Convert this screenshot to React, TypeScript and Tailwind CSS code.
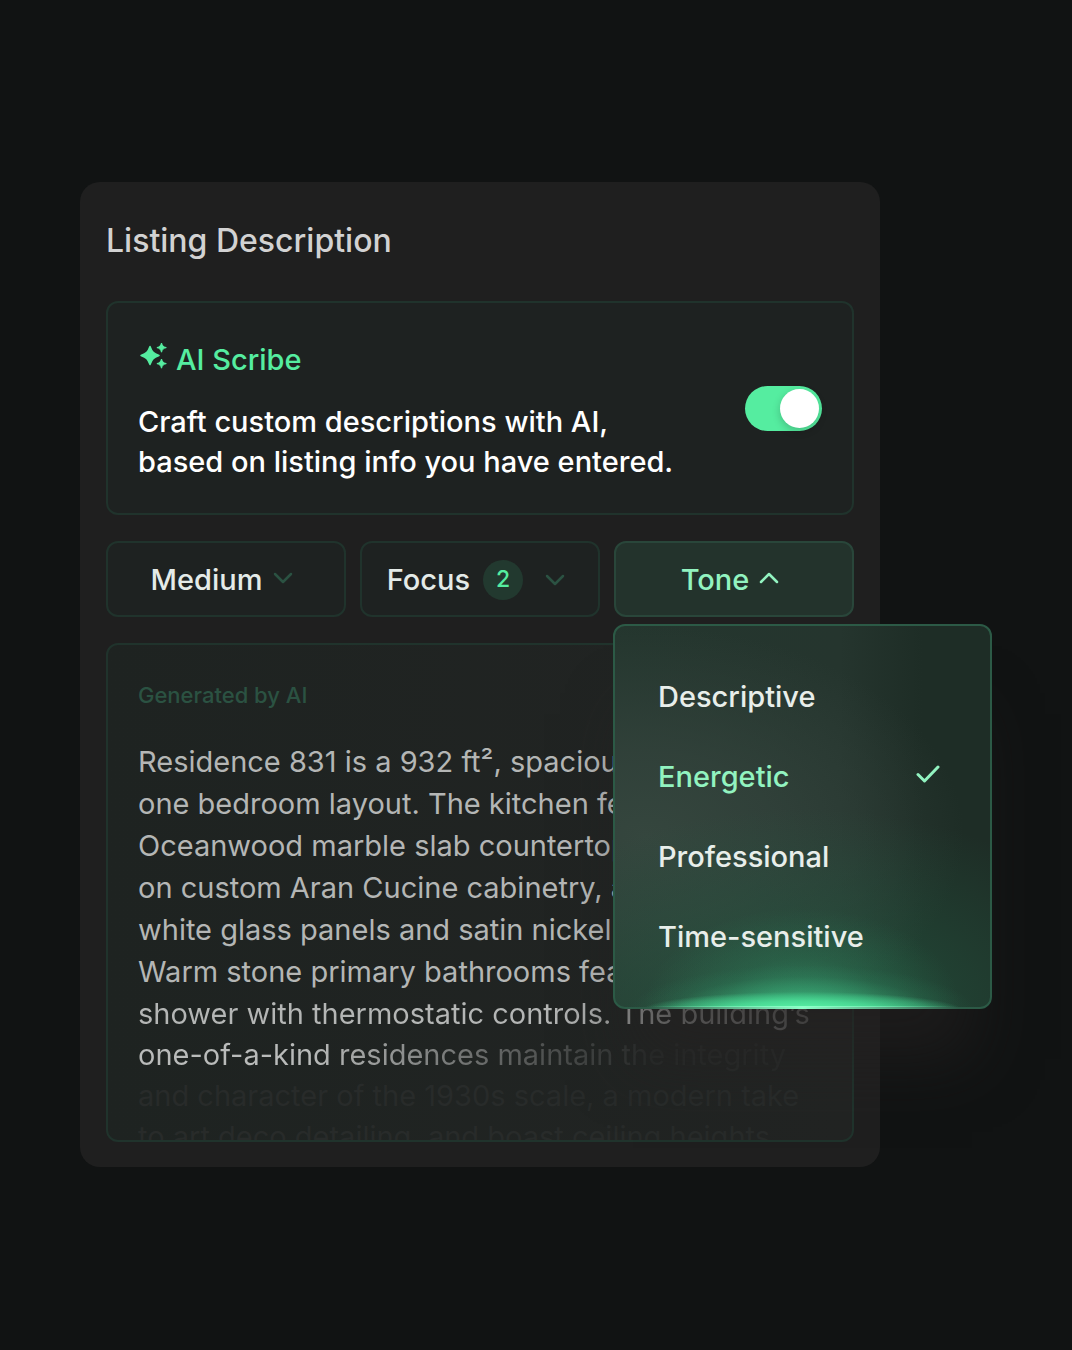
import React, { useState } from 'react';
import { clsx } from 'clsx';

const tones = ['Descriptive', 'Energetic', 'Professional', 'Time-sensitive'];

const generatedLines = [
  'Residence 831 is a 932 ft², spacious',
  'one bedroom layout. The kitchen features',
  'Oceanwood marble slab countertops',
  'on custom Aran Cucine cabinetry, and',
  'white glass panels and satin nickel.',
  'Warm stone primary bathrooms feature',
];

const Sparkles: React.FC = () => (
  <svg
    width="28"
    height="28"
    viewBox="0 0 28 28"
    fill="currentColor"
    stroke="currentColor"
    strokeLinejoin="round"
    aria-hidden="true"
  >
    <path
      strokeWidth="1.5"
      d="M10 4.5C12 10 13.500 11.500 19 13.500C13.500 15.500 12 17 10 22.500C8 17 6.500 15.500 1 13.500C6.500 11.500 8 10 10 4.500Z"
    />
    <path d="M21.500 1C22.400 4 23.200 4.800 26.300 5.600C23.200 6.400 22.400 7.200 21.500 10.200C20.600 7.200 19.800 6.400 16.900 5.600C19.800 4.800 20.600 4 21.500 1Z" />
    <path d="M21.500 17C22.400 20 23.200 20.800 26.300 21.600C23.200 22.400 22.400 23.200 21.500 26.200C20.600 23.200 19.800 22.400 16.900 21.600C19.800 20.800 20.600 20 21.500 17Z" />
  </svg>
);

const Chevron: React.FC<{ up?: boolean; className?: string }> = ({ up, className }) => (
  <svg
    width="20"
    height="12"
    viewBox="0 0 20 12"
    fill="none"
    stroke="currentColor"
    strokeWidth="2.5"
    strokeLinecap="round"
    strokeLinejoin="round"
    className={className}
    aria-hidden="true"
  >
    <path d={up ? 'M2 10L10 2L18 10' : 'M2 2L10 10L18 2'} />
  </svg>
);

const Check: React.FC = () => (
  <svg
    width="24"
    height="18"
    viewBox="0 0 24 18"
    fill="none"
    stroke="currentColor"
    strokeWidth="3"
    strokeLinecap="round"
    strokeLinejoin="round"
    className="mb-[6px]"
    aria-hidden="true"
  >
    <path d="M2 9.5L8.5 16L22 2" />
  </svg>
);

const filterButton =
  'flex h-[76px] w-full items-center justify-center rounded-xl border-2 pt-[2px] pr-2 text-[29px] leading-9 font-medium';

export default function App() {
  const [enabled, setEnabled] = useState(true);
  const [open, setOpen] = useState(true);
  const [tone, setTone] = useState('Energetic');

  return (
    <main className="relative min-h-screen overflow-hidden bg-[#111313] pt-[182px] pr-48 pb-[182px] pl-20 font-['Inter',sans-serif]">
      <section className="relative rounded-[20px] bg-[#1f1f1f] px-[26px] pt-[38px] pb-[25px]">
        <h1 className="text-[32px] leading-[42px] font-medium text-[#d2d2d2]">Listing Description</h1>

        <div className="mt-[39px] flex items-center justify-between rounded-xl border-2 border-[#20332c] bg-[#1e2221] px-[30px] pt-[37px] pb-[31px]">
          <div>
            <h2 className="flex items-center gap-2 pl-[2px] text-[29px] leading-10 font-medium text-[#55eda0]">
              <span className="mb-2">
                <Sparkles />
              </span>
              AI Scribe
            </h2>
            <p id="scribe-hint" className="mt-[22px] text-[29px] leading-10 font-medium text-white">
              Craft custom descriptions with AI,
              <br />
              based on listing info you have entered.
            </p>
          </div>
          <label className="relative mb-[6px] shrink-0 cursor-pointer">
            <input
              type="checkbox"
              role="switch"
              aria-label="AI Scribe"
              aria-describedby="scribe-hint"
              checked={enabled}
              onChange={(e) => setEnabled(e.target.checked)}
              className="peer block h-[45px] w-[77px] appearance-none rounded-full bg-[#3a4440] checked:bg-[#55eda0]"
            />
            <span className="pointer-events-none absolute top-[3px] left-[3px] size-[39px] rounded-full bg-white shadow-[0_3px_8px_rgba(0,0,0,0.2)] peer-checked:left-[35px]" />
          </label>
        </div>

        <div className="mt-[26px] grid grid-cols-3 gap-[14px]">
          <button type="button" className={clsx(filterButton, 'gap-[11px] border-[#20332c] bg-[#1e2221] text-[#e4ebe8]')}>
            Medium
            <Chevron className="mb-1 text-[#2b5242]" />
          </button>
          <button type="button" className={clsx(filterButton, 'border-[#20332c] bg-[#1e2221] text-[#e4ebe8]')}>
            Focus
            <span className="ml-[13px] flex size-10 items-center justify-center rounded-full bg-[#22392f] pb-[2px] text-[23px] leading-6 text-[#55eda0]">
              2
            </span>
            <Chevron className="ml-[22px] text-[#2b5242]" />
          </button>
          <div className="relative z-10">
            <button
              type="button"
              aria-haspopup="listbox"
              aria-expanded={open}
              onClick={() => setOpen(!open)}
              className={clsx(filterButton, 'gap-[10px] border-[#29463a] bg-[#23332c] text-[#92f3c0]')}
            >
              Tone
              <Chevron up={open} className="mb-1" />
            </button>

            {open && (
              <div
                role="listbox"
                aria-label="Tone"
                className="absolute top-full -left-px mt-[7px] w-[379px] rounded-xl border-2 border-[#2c5a46] bg-[radial-gradient(ellipse_43%_5%_at_50%_101%,#5df5a9_0%,#50eba0c0_50%,#45d59070_80%,transparent_100%),radial-gradient(ellipse_46%_12%_at_50%_101%,#46d08fc0_0%,#3cb67d80_40%,#2f8a6130_75%,transparent_100%),radial-gradient(ellipse_42%_26%_at_50%_100%,#37a87490_0%,#2f946538_50%,transparent_100%),radial-gradient(ellipse_90%_52%_at_50%_100%,#26704f90_0%,#255f4560_45%,transparent_100%),radial-gradient(ellipse_85%_55%_at_8%_55%,#35463e_0%,#33433ccc_40%,transparent_100%),linear-gradient(90deg,#24362e_0%,#25352e_60%,#1e2d26_82%,#1e2d26_100%)] pt-[31px] pb-[30px] shadow-[0_70px_60px_-20px_rgba(36,34,34,0.6)]"
              >
                {tones.map((item) => (
                  <button
                    key={item}
                    type="button"
                    role="option"
                    aria-selected={item === tone}
                    onClick={() => setTone(item)}
                    className={clsx(
                      'flex h-20 w-full items-center justify-between pr-[50px] pl-[43px] text-left text-[29px] leading-9 font-medium',
                      item === tone ? 'text-[#92f3c0]' : 'text-[#e8eeea]'
                    )}
                  >
                    {item}
                    {item === tone && <Check />}
                  </button>
                ))}
                <div className="absolute inset-x-8 -bottom-[2px] h-[3px] bg-linear-to-r from-transparent via-[#8dffc8] to-transparent" />
              </div>
            )}
          </div>
        </div>

        <article className="mt-[26px] h-[499px] overflow-hidden rounded-xl border-2 border-[#20332c] bg-linear-to-r from-[#1e2321] to-[#222423] px-[30px] pt-8 text-[29px] whitespace-nowrap">
          <h2 className="text-[22px] leading-9 font-medium text-[#2b5242]">Generated by AI</h2>
          <div className="mt-[28px] leading-[42px] text-[#b4b6b5]">
            {generatedLines.map((line) => (
              <p key={line}>{line}</p>
            ))}
          </div>
          <div className="leading-[41px] text-[#282b2a]">
            <p className="bg-linear-to-r from-[#b4b6b5] from-60% to-[#5c5e5d] bg-clip-text text-transparent">
              shower with thermostatic controls. The building’s
            </p>
            <p className="bg-linear-to-r from-[#b9bbba] from-25% via-[#5c5e5d] via-55% to-[#282b2a] to-75% bg-clip-text text-transparent">
              one-of-a-kind residences maintain the integrity
            </p>
            <p>and character of the 1930s scale, a modern take</p>
            <p>to art deco detailing, and boast ceiling heights</p>
          </div>
        </article>
      </section>
    </main>
  );
}
